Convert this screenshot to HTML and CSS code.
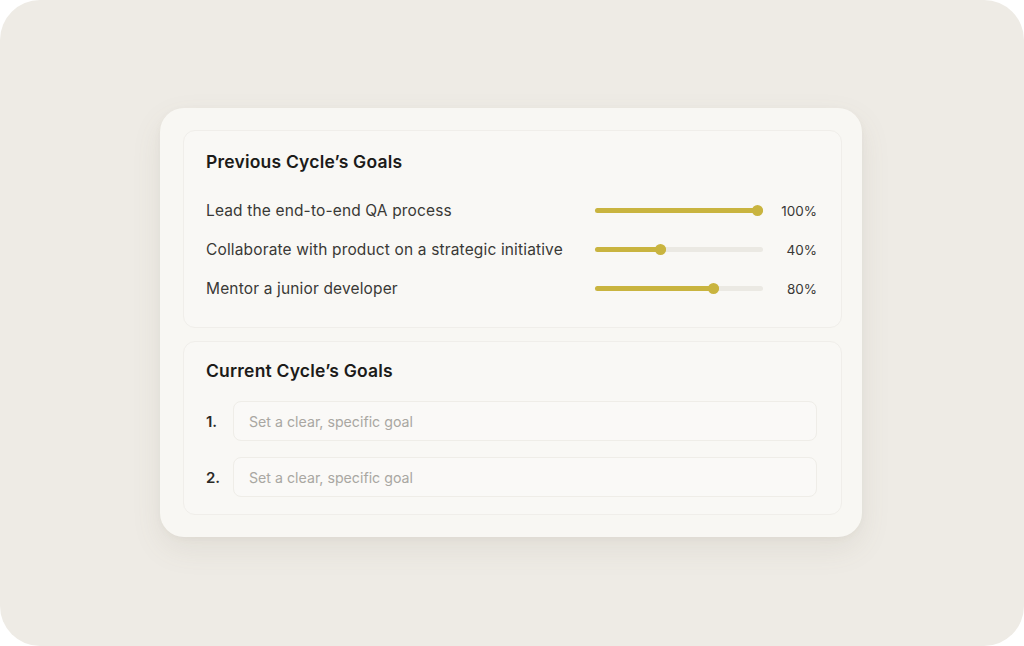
FILE: index.html
```html
<!DOCTYPE html>
<html lang="en">
<head>
<meta charset="utf-8">
<title>Goals</title>
<link rel="stylesheet" href="styles.css">
</head>
<body>
<div class="page">
  <div class="card">
    <section class="panel prev">
      <h2 class="title">Previous Cycle’s Goals</h2>
      <div class="row">
        <span class="label">Lead the end-to-end QA process</span>
        <div class="slider"><div class="fill" style="width:100%"><span class="knob"></span></div></div>
        <span class="pct">100%</span>
      </div>
      <div class="row">
        <span class="label">Collaborate with product on a strategic initiative</span>
        <div class="slider"><div class="fill" style="width:42%"><span class="knob"></span></div></div>
        <span class="pct">40%</span>
      </div>
      <div class="row">
        <span class="label">Mentor a junior developer</span>
        <div class="slider"><div class="fill" style="width:74%"><span class="knob"></span></div></div>
        <span class="pct">80%</span>
      </div>
    </section>
    <section class="panel curr">
      <h2 class="title">Current Cycle’s Goals</h2>
      <div class="goals">
        <div class="goal">
          <span class="num">1.</span>
          <div class="input">Set a clear, specific goal</div>
        </div>
        <div class="goal">
          <span class="num">2.</span>
          <div class="input">Set a clear, specific goal</div>
        </div>
      </div>
    </section>
  </div>
</div>
</body>
</html>
```
FILE: styles.css
```css
html, body {
  margin: 0;
  padding: 0;
  background: #ffffff;
}
body {
  font-family: Inter, "Noto Sans", "Liberation Sans", sans-serif;
  color: #2f2e2b;
}
.page {
  width: 1024px;
  height: 646px;
  background: #eeebe5;
  border-radius: 40px;
  display: flex;
  align-items: center;
  justify-content: center;
}
.card {
  width: 702px;
  height: 429px;
  margin-left: -2px;
  margin-top: -1px;
  box-sizing: border-box;
  background: #f8f7f3;
  border-radius: 24px;
  padding: 22px 20px 22px 23px;
  display: flex;
  flex-direction: column;
  gap: 13px;
  box-shadow: 0 12px 30px rgba(120, 110, 90, 0.10), 0 2px 6px rgba(120, 110, 90, 0.05);
}
.panel {
  border: 1px solid #f0eeea;
  border-radius: 12px;
  background: #f9f8f5;
  box-sizing: border-box;
}
.prev {
  height: 198px;
  padding: 18px 24px 0 22px;
}
.curr {
  height: 174px;
  padding: 16px 24px 0 22px;
}
.title {
  margin: 0;
  font-size: 17.5px;
  line-height: 26px;
  font-weight: 600;
  color: #1c1b19;
  letter-spacing: 0.2px;
}
.prev .title {
  margin-bottom: 16px;
}
.row {
  display: flex;
  align-items: center;
  height: 39px;
}
.label {
  flex: 1;
  font-size: 15.5px;
  letter-spacing: 0.15px;
  color: #3a3936;
}
.slider {
  width: 168px;
  height: 5px;
  border-radius: 3px;
  background: #ebe9e3;
  position: relative;
}
.fill {
  height: 100%;
  border-radius: 3px;
  background: #c9b43f;
  position: relative;
}
.knob {
  position: absolute;
  right: 0;
  top: 50%;
  width: 11px;
  height: 11px;
  margin-top: -5.5px;
  border-radius: 50%;
  background: #c9b43f;
}
.pct {
  width: 54px;
  text-align: right;
  font-size: 13.5px;
  color: #3a3936;
}
.goals {
  margin-top: 17px;
  display: flex;
  flex-direction: column;
  gap: 16px;
}
.goal {
  display: flex;
  align-items: center;
}
.num {
  width: 27px;
  font-size: 15px;
  font-weight: 600;
  color: #2a2926;
}
.input {
  flex: 1;
  height: 40px;
  box-sizing: border-box;
  border: 1px solid #efede8;
  border-radius: 8px;
  background: #faf9f7;
  padding: 0 15px;
  display: flex;
  align-items: center;
  font-size: 14.2px;
  color: #a9a7a2;
}
```
